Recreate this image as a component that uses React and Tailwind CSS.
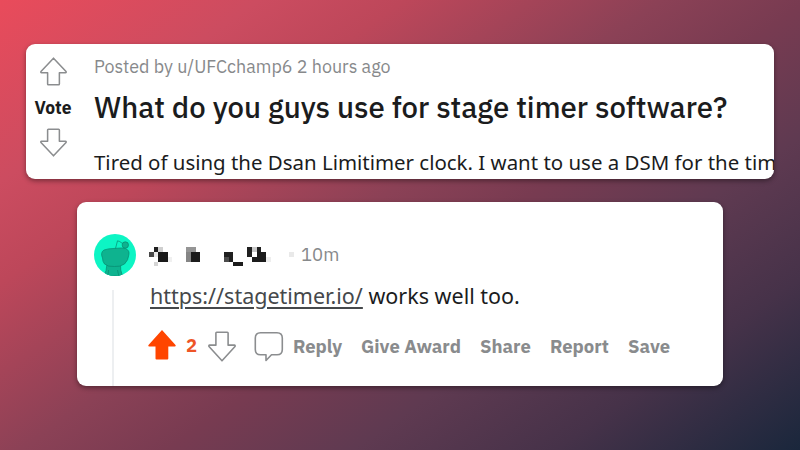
import React from "react";

const PLEX = "font-['IBM_Plex_Sans','Noto_Sans',sans-serif]";

function OutlineArrow({ down = false, className }) {
  return (
    <svg
      viewBox="0 0 28 30"
      preserveAspectRatio="none"
      className={className}
      fill="none"
      stroke="#8b8d8f"
      strokeWidth="1.6"
      strokeLinejoin="round"
    >
      <path
        transform={down ? "matrix(1 0 0 -1 0 30)" : undefined}
        d="M14 1.2 L27 15 Q27.4 16.3 26.5 16.3 H20.1 V28 Q20.1 28.8 19.3 28.8 H8.7 Q7.9 28.8 7.9 28 V16.3 H1.5 Q.6 16.3 1 15 Z"
      />
    </svg>
  );
}

// Pixelated user name: [column, row, width, height, colour]
const CELLS = [
  [1, 0, 1, 1, "#202020"], [2, 0, 1, 1, "#cfcfcf"], [0, 1, 1, 1, "#484848"],
  [1, 1, 1, 1, "#e9e9e9"], [2, 1, 2, 2, "#191919"], [4, 2, 1, 1, "#f0f0f0"],
  [1, 3, 1, 1, "#d5d5d5"],
  [8, 0, 2, 1, "#959595"], [8, 1, 1, 2, "#858585"], [9, 1, 2, 2, "#1c1c1c"],
  [16, 1, 2, 2, "#202020"], [16, 2, 1, 1, "#4c4c4c"], [18, 3, 2, 1, "#1c1c1c"],
  [21, 0, 3, 2, "#202020"], [22, 0, 1, 1, "#c9c9c9"], [22, 1, 1, 1, "#ffffff"],
  [23, 1, 2, 1, "#1c1c1c"], [22, 2, 3, 1, "#1c1c1c"], [25, 2, 1, 1, "#eeeeee"],
  [30, 1, 1, 1, "#e9e9e9"],
];

function HiddenName() {
  return (
    <svg
      viewBox="0 0 31 4"
      preserveAspectRatio="none"
      className="mt-[3px] h-[19.500px] w-[145px] shrink-0"
      shapeRendering="crispEdges"
    >
      {CELLS.map(([x, y, w, h, c], i) => (
        <rect key={i} x={x} y={y} width={w} height={h} fill={c} />
      ))}
    </svg>
  );
}

function Avatar() {
  return (
    <svg viewBox="0 0 42 42" className="size-[42px] shrink-0">
      <defs>
        <clipPath id="disc"><circle cx="21" cy="21" r="21" /></clipPath>
      </defs>
      <circle cx="21" cy="21" r="21" fill="#0df5c4" />
      <g clipPath="url(#disc)" fill="#0eb38f" stroke="#078a70" strokeWidth="0.7">
        <path d="M13 30 Q12.500 37 10 42 H28.500 Q26 36 26.500 30 Z" />
        <path d="M14.500 36 Q14.500 39 13.500 42 M23.500 36 Q24 39 25 42" fill="none" />
        <path d="M10 16 Q14 14.400 21 14.400 Q28 13.500 31.500 14.500 Q36 16.500 34.800 21 Q34.500 26 30.500 30 Q26 33 20.500 32.500 Q14 33 10.500 30 Q8.500 27.500 8.500 24 Q6 18.500 10 16 Z" />
        <path d="M21.500 14.500 L23.500 6.800 Q25.500 7 28.500 9.500" fill="none" />
        <circle cx="31.300" cy="11" r="3.200" />
      </g>
    </svg>
  );
}

export default function App() {
  return (
    <main className="flex h-[450px] w-[800px] flex-col items-center gap-[23px] overflow-hidden bg-[linear-gradient(145deg,#e94b5b_0%,#cc4c60_18%,#bd475a_28%,#8b4156_46%,#783b51_56%,#5f3a51_69%,#463249_83%,#1a273c_100%)] pt-11 font-['Noto_Sans',sans-serif] text-[#1b1c1d]">
      <section className="flex h-[135px] w-[748px] overflow-hidden rounded-[9px] bg-white shadow-[0_2px_5px_rgba(0,0,0,0.4)]">
        <div className="flex w-[68px] shrink-0 flex-col items-center pr-[14px] pt-[13px]">
          <OutlineArrow className="h-[29px] w-[27px]" />
          <span className={`${PLEX} mt-[12px] text-[17.500px] leading-5 font-bold`}>Vote</span>
          <OutlineArrow down className="mt-[10px] h-[29px] w-[27px]" />
        </div>
        <div className="flex flex-col whitespace-nowrap">
          <p className={`${PLEX} pt-[11px] text-[17.900px] leading-6 text-[#87898b]`}>
            Posted by u/UFCchamp6 2 hours ago
          </p>
          <h1 className={`${PLEX} mt-[10px] text-[29.350px] leading-9 font-medium`}>
            What do you guys use for stage timer software?
          </h1>
          <p className="mt-[23px] text-[20.450px] leading-7">
            Tired of using the Dsan Limitimer clock. I want to use a DSM for the tim
          </p>
        </div>
      </section>

      <section className="flex h-[184px] w-[646px] overflow-hidden rounded-[9px] bg-white shadow-[0_2px_5px_rgba(0,0,0,0.4)]">
        <div className="flex w-[72px] shrink-0 flex-col pl-[17px] pt-8">
          <Avatar />
          <div className="ml-[18px] mt-[14px] w-[2px] flex-1 bg-[#edeff1]" />
        </div>
        <div className="flex flex-col whitespace-nowrap pt-8">
          <div className={`${PLEX} flex h-[42px] items-center gap-[7px] text-[18.500px] text-[#87898b]`}>
            <HiddenName />
            <span>10m</span>
          </div>
          <p className="ml-px mt-[4px] text-[21.500px] leading-8">
            <a className="text-[#45484b] underline decoration-[1.500px] underline-offset-[3px]">https://stagetimer.io/</a> works well too.
          </p>
          <div className={`${PLEX} -ml-px mt-[16px] flex h-[38px] items-center text-[18.500px] font-bold text-[#898b8d]`}>
            <svg viewBox="0 0 28 30" className="-mt-[4px] h-[30px] w-[28px]" fill="#ff4500">
              <path d="M14 0 L27.500 15 Q28.200 16.500 26.800 16.500 H20.300 V28.500 Q20.300 29.500 19.300 29.500 H8.500 Q7.500 29.500 7.500 28.500 V16.500 H1.200 Q-.2 16.500 .5 15 Z" />
            </svg>
            <span className="-mt-[2px] ml-[10px] w-[22px] text-[#ee5527]">2</span>
            <OutlineArrow down className="-mt-[2px] h-[31px] w-[28px]" />
            <svg viewBox="0 0 30 32" className="ml-[18px] h-8 w-[30px]" fill="none" stroke="#8b8d8f" strokeWidth="1.600" strokeLinejoin="round">
              <path d="M6.500 1.700 H23 Q28.300 1.700 28.300 7 V18.500 Q28.300 23.800 23 23.800 H17.500 L12 29.500 V23.800 H6.500 Q1.300 23.800 1.300 18.500 V7 Q1.300 1.700 6.500 1.700 Z" />
            </svg>
            <span className="ml-[9px] w-[68px]">Reply</span>
            <span className="w-[119px]">Give Award</span>
            <span className="w-[70px]">Share</span>
            <span className="w-[78px]">Report</span>
            <span>Save</span>
          </div>
        </div>
      </section>
    </main>
  );
}
